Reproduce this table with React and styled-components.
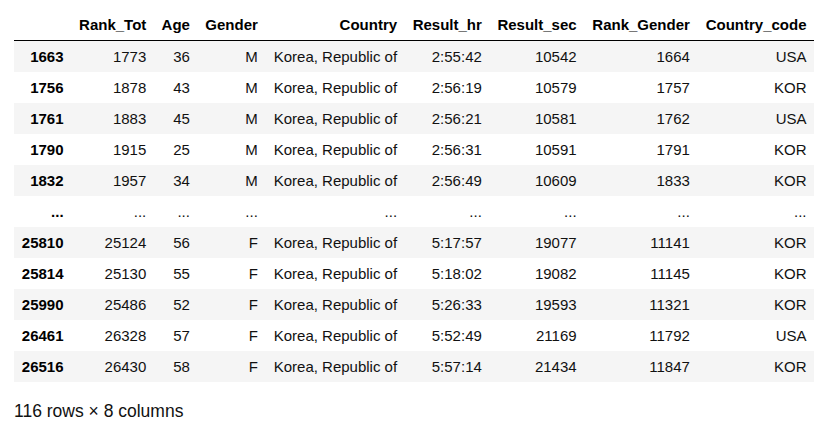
import React from 'react'
import styled, { createGlobalStyle } from 'styled-components'

const GlobalStyle = createGlobalStyle`
  body {
    margin: 0;
    background: #fff;
    font-family: "Liberation Sans", Arial, sans-serif;
    color: #000;
  }
`

const Output = styled.div`
  padding: 9px 14px 0 14px;
  font-size: 15px;
`

const Frame = styled.table`
  border-collapse: collapse;
  border-spacing: 0;
  border: none;
  font-size: 15px;
  width: 800px;
  table-layout: auto;
`

const HeadRow = styled.tr`
  border-bottom: 1px solid #000;
`

const HeadCell = styled.th`
  text-align: right;
  font-weight: bold;
  padding: 7.5px 7.5px;
  line-height: 16px;
  white-space: nowrap;
  vertical-align: middle;
`

const Row = styled.tr`
  background: ${props => (props.striped ? '#f5f5f5' : '#fff')};
`

const IndexCell = styled.th`
  text-align: right;
  font-weight: bold;
  padding: 7.5px 7.5px;
  line-height: 16px;
  white-space: nowrap;
`

const Cell = styled.td`
  text-align: right;
  padding: 7.5px 7.5px;
  line-height: 16px;
  white-space: nowrap;
  color: #111;
`

const Shape = styled.p`
  margin: 19px 0 0 0;
  font-size: 17.5px;
  line-height: 20px;
  color: #111;
`

const columns = ['Rank_Tot', 'Age', 'Gender', 'Country', 'Result_hr', 'Result_sec', 'Rank_Gender', 'Country_code']

const rows = [
  ['1663', '1773', '36', 'M', 'Korea, Republic of', '2:55:42', '10542', '1664', 'USA'],
  ['1756', '1878', '43', 'M', 'Korea, Republic of', '2:56:19', '10579', '1757', 'KOR'],
  ['1761', '1883', '45', 'M', 'Korea, Republic of', '2:56:21', '10581', '1762', 'USA'],
  ['1790', '1915', '25', 'M', 'Korea, Republic of', '2:56:31', '10591', '1791', 'KOR'],
  ['1832', '1957', '34', 'M', 'Korea, Republic of', '2:56:49', '10609', '1833', 'KOR'],
  ['...', '...', '...', '...', '...', '...', '...', '...', '...'],
  ['25810', '25124', '56', 'F', 'Korea, Republic of', '5:17:57', '19077', '11141', 'KOR'],
  ['25814', '25130', '55', 'F', 'Korea, Republic of', '5:18:02', '19082', '11145', 'KOR'],
  ['25990', '25486', '52', 'F', 'Korea, Republic of', '5:26:33', '19593', '11321', 'KOR'],
  ['26461', '26328', '57', 'F', 'Korea, Republic of', '5:52:49', '21169', '11792', 'USA'],
  ['26516', '26430', '58', 'F', 'Korea, Republic of', '5:57:14', '21434', '11847', 'KOR'],
]

export default function App() {
  return (
    <Output>
      <GlobalStyle />
      <Frame>
        <thead>
          <HeadRow>
            <HeadCell />
            {columns.map(c => <HeadCell key={c}>{c}</HeadCell>)}
          </HeadRow>
        </thead>
        <tbody>
          {rows.map((r, i) => (
            <Row key={r[0] + i} striped={i % 2 === 0}>
              <IndexCell>{r[0]}</IndexCell>
              {r.slice(1).map((v, j) => <Cell key={j}>{v}</Cell>)}
            </Row>
          ))}
        </tbody>
      </Frame>
      <Shape>116 rows × 8 columns</Shape>
    </Output>
  )
}
